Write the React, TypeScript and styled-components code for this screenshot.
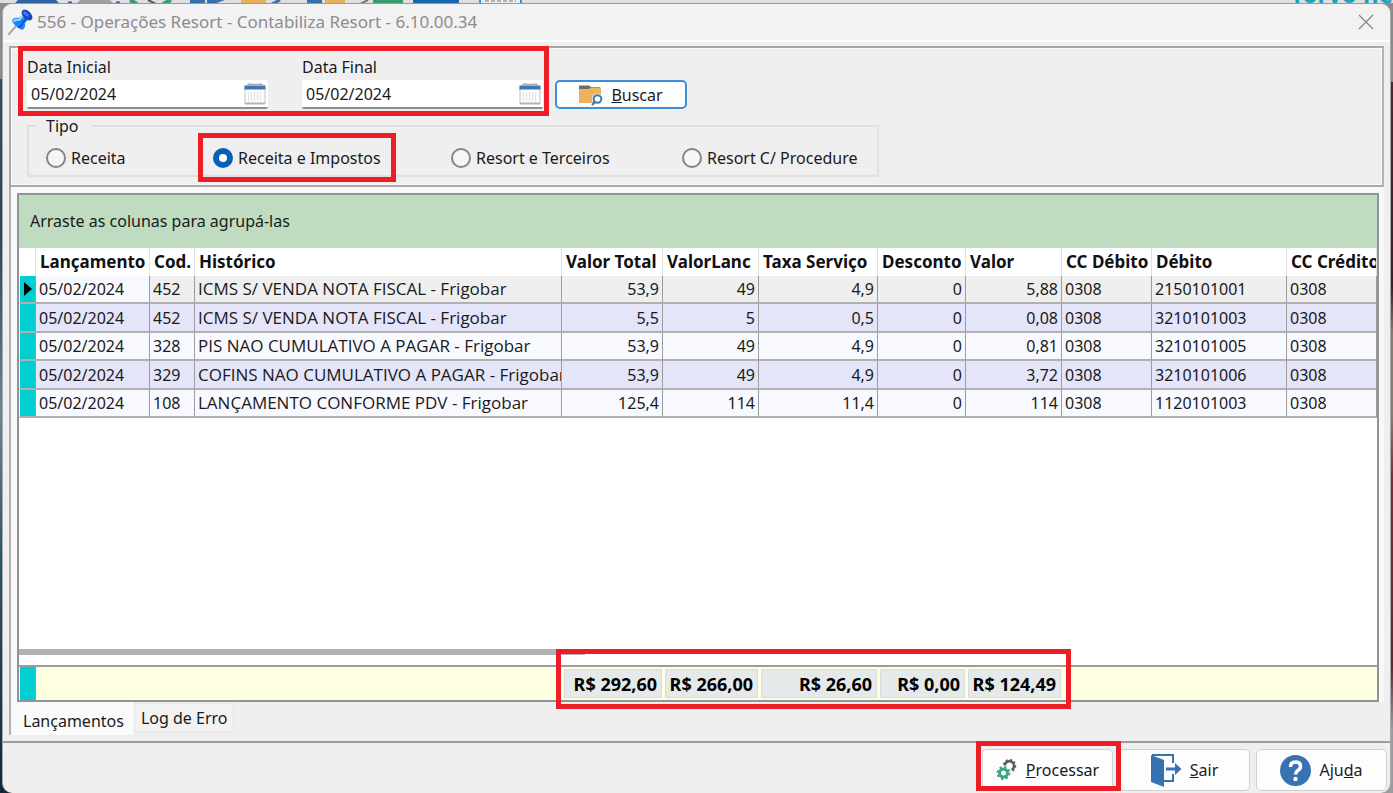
import React from "react";
import styled, { createGlobalStyle, css } from "styled-components";

const GlobalStyle = createGlobalStyle`
  * { box-sizing: border-box; }
  html, body { margin: 0; }
  body {
    font-family: "Noto Sans", "Open Sans", sans-serif;
    font-size: 16px;
    line-height: 20px;
    color: #1a1a1a;
    overflow: hidden;
  }
  button, input { font: inherit; color: inherit; }
`;

const Desktop = styled.div`
  height: 100vh;
  display: flex;
  flex-direction: column;
  background: linear-gradient(#8a8c8e 0 10%, #2c4f60 10%, #234a60 30%, #6a8690 52%, #2b556a 70%, #10283a);
`;

const Strip = styled.div`
  flex: none;
  height: 3px;
  display: flex;
  justify-content: space-between;
  background: #dfdfdf;
  overflow: hidden;
`;

const Banner = styled.span`
  align-self: flex-end;
  color: #1fa0bd;
  font-size: 24px;
  line-height: 18px;
  font-weight: 700;
  white-space: nowrap;
`;

const Backdrop = styled.div`
  flex: 1;
  min-height: 0;
  display: flex;
  padding: 0 2px;
  background: linear-gradient(#8a8c8e 0 10%, #4a2a30 10%, #3a2028 36%, #8c7d74 42%, #8c7d74 52%, #7a3038 60%, #5b2b33 84%, #9a9ca0 92%) right / 50% 100% no-repeat;
`;

const Window = styled.main`
  flex: 1;
  min-width: 0;
  display: flex;
  flex-direction: column;
  background: #efefef;
  border: 1px solid #a9a9a9;
  border-top-color: #9a9a9a;
  border-bottom: 0;
  border-radius: 10px;
  overflow: hidden;
`;

const TitleBar = styled.header`
  flex: none;
  height: 38px;
  display: flex;
  align-items: center;
  padding: 0 16px 0 5px;
  background: #f2f2f2;
  border-bottom: 2px solid #fdfdfd;
`;

const Title = styled.h1`
  flex: 1;
  margin: 0 0 0 4px;
  font-size: 17px;
  line-height: 22px;
  font-weight: 400;
  color: #8c8c8c;
`;

const IconButton = styled.button`
  display: flex;
  padding: 0;
  border: 0;
  background: none;
`;

const Content = styled.div`
  flex: 1;
  min-height: 0;
  display: flex;
  flex-direction: column;
  margin: 4px 6px 0;
`;

const SearchPanel = styled.section`
  flex: none;
  padding: 9px 16px 8px;
  border: 2px solid #b4b4b4;
  border-color: #a8a8a8 #b4b4b4 #a8a8a8 #a8a8a8;
  outline: 1px solid #fafafa;
  outline-offset: -3px;
`;

const FieldRow = styled.div`
  display: flex;
  align-items: flex-end;
  gap: 12px;
`;

const Highlightable = styled.div`
  position: relative;
  display: flex;
`;

const Highlight = styled.span<{ $inset: string; $width?: number }>`
  position: absolute;
  inset: ${(p) => p.$inset};
  ${(p) => p.$width && `width: ${p.$width}px;`}
  border: 5px solid #ee1c25;
  pointer-events: none;
  z-index: 2;
`;

const DateFields = styled(Highlightable)`
  gap: 34px;
`;

const Field = styled.label`
  width: 241px;
  display: flex;
  flex-direction: column;
  gap: 3px;
`;

const InputBox = styled.span`
  height: 29px;
  display: flex;
  align-items: center;
  padding: 0 2px 0 4px;
  background: #fff;
  border-bottom: 2px solid #8f8f8f;
  border-radius: 2px;
`;

const DateInput = styled.input`
  flex: 1;
  min-width: 0;
  padding: 0;
  border: 0;
  outline: 0;
  background: none;
`;

const PushButton = styled.button<{ $large?: boolean; $focused?: boolean }>`
  width: ${(p) => (p.$large ? 131 : 132)}px;
  height: ${(p) => (p.$large ? 42 : 29)}px;
  display: flex;
  align-items: center;
  justify-content: center;
  gap: 8px;
  padding: 0;
  background: #fdfdfd;
  border-radius: 5px;
  border: ${(p) => (p.$focused ? "2px solid #3a8edb" : "1px solid #d0d0d0")};
`;

const TypeGroup = styled.fieldset`
  max-width: 852px;
  height: 60px;
  margin: 8px 0 0;
  padding: 14px 17px 0;
  border: 2px solid #e0e0e0;
`;

const Legend = styled.legend`
  padding: 0 12px 0 9px;
  margin-left: -9px;
  line-height: 18px;
  margin-bottom: -1px;
`;

const Options = styled.div`
  display: grid;
  grid-template-columns: 167px 238px 231px auto;
`;

const Option = styled.label`
  display: flex;
  align-items: center;
  gap: 5px;
  white-space: nowrap;
`;

const Radio = styled.input`
  appearance: none;
  width: 20px;
  height: 20px;
  margin: 0;
  border: 2px solid #858585;
  border-radius: 50%;
  background: #f6f6f6;
  &:checked {
    border: 6px solid #0560b6;
    background: #fff;
  }
`;

const GridArea = styled.section`
  flex: 1;
  min-height: 0;
  display: flex;
  flex-direction: column;
  padding: 6px 5px 0 6px;
  border-left: 2px solid #b0b0b0;
  background: #f8f8f8;
`;

const GridFrame = styled.div`
  flex: 1;
  min-height: 0;
  display: flex;
  flex-direction: column;
  background: #fff;
  border: 2px solid #8e9499;
  overflow: hidden;
`;

const GroupBar = styled.div`
  flex: none;
  height: 53px;
  padding: 16px 11px;
  background: #bfdcc0;
`;

const Table = styled.table`
  width: 100%;
  table-layout: fixed;
  border-collapse: separate;
  border-spacing: 0;
`;

const HeadCell = styled.th`
  height: 28px;
  padding: 0 0 0 4px;
  text-align: left;
  font-size: 17px;
  font-weight: 700;
  color: #111;
  white-space: nowrap;
  overflow: hidden;
  border-right: 1px solid #e0e0e0;
`;

const Row = styled.tr<{ $current: boolean }>`
  height: 28px;
  background: ${(p) => (p.$current ? "#efefef" : "#f8f9ff")};
  &:nth-child(even) {
    height: 29px;
    background: #e4e5f9;
  }
`;

const cellEdge = css`
  border-right: 1px solid #9c9c9c;
  border-bottom: 2px solid #b0b0b0;
`;

const Cell = styled.td<{ $right?: boolean; $plain?: boolean; $wide?: boolean }>`
  padding: 0 3px;
  text-align: ${(p) => (p.$right ? "right" : "left")};
  ${(p) => p.$wide && `font-family: "Open Sans", "Noto Sans", sans-serif; font-size: 17px;`}
  white-space: nowrap;
  overflow: hidden;
  ${(p) => p.$plain && "background: #f8f9ff;"}
  ${cellEdge}
`;

const Marker = styled.td`
  padding: 0;
  background: #00ced1;
  border-left: 1px solid #fff;
  ${cellEdge}
`;

const Spacer = styled.div`
  flex: 1;
`;

const ScrollTrack = styled.div`
  flex: none;
  height: 16px;
`;

const ScrollThumb = styled.div`
  width: 41.7%;
  height: 6px;
  background: #b2b2b2;
`;

const Totals = styled.div`
  flex: none;
  border-top: 2px solid #9c9c9c;
  background: #ffffe1;
`;

const TotalCell = styled.td`
  height: 33px;
  padding: 2px 1px 2px 2px;
`;

const TotalMarker = styled(Marker)`
  border-bottom: 0;
`;

const TotalBox = styled.output`
  display: flex;
  align-items: center;
  justify-content: flex-end;
  height: 29px;
  padding-right: 4px;
  background: #e5e9ea;
  border: 1px solid #d9dcdc;
  font-size: 18px;
  font-weight: 700;
  white-space: nowrap;
  color: #000;
`;

const Tabs = styled.nav`
  flex: none;
  height: 33px;
  display: flex;
  margin: 0 -5px 0 -6px;
  background: #efefef;
`;

const Tab = styled.button<{ $active?: boolean }>`
  padding: ${(p) => (p.$active ? "4px 10px 0 12px" : "0 6px")};
  height: ${(p) => (p.$active ? 33 : 29)}px;
  margin-top: ${(p) => (p.$active ? 0 : 1)}px;
  border: ${(p) => (p.$active ? "0" : "1px solid #e6e6e6")};
  background: ${(p) => (p.$active ? "#fafafa" : "#f2f2f2")};
`;

const ActionBar = styled.footer`
  flex: none;
  height: 52px;
  display: flex;
  justify-content: flex-end;
  align-items: flex-start;
  gap: 6px;
  margin-top: 6px;
  padding: 6px 3px 0;
  border-top: 2px solid #9c9c9c;
`;

const PinIcon = () => (
  <svg width="25" height="26" viewBox="0 0 25 26" aria-hidden="true">
    <path d="M1 25 L10 15" stroke="#a5a9ae" strokeWidth="2" strokeLinecap="round" />
    <path d="M4 12 Q5 8 11 9 L16 5 L21 9 L17 14 Q18 19 14 21 Q7 18 4 12Z" fill="#1f86f5" />
    <path d="M6 12 Q7 10 11 11 L15 7" stroke="#9bd6ff" strokeWidth="2" fill="none" strokeLinecap="round" />
    <path d="M10 18 Q14 18 15 13 L20 9" stroke="#0a58dc" strokeWidth="2" fill="none" />
    <ellipse cx="19" cy="6" rx="6.500" ry="4" transform="rotate(45 19 6)" fill="#1447c4" />
    <ellipse cx="18" cy="5" rx="3.500" ry="1.500" transform="rotate(45 18 5)" fill="#3f7df0" />
  </svg>
);

const CloseIcon = () => (
  <svg width="16" height="16" viewBox="0 0 16 16" aria-hidden="true">
    <path d="M1 1 L15 15 M15 1 L1 15" stroke="#858585" strokeWidth="1.200" />
  </svg>
);

const CalendarIcon = () => (
  <svg width="22" height="22" viewBox="0 0 22 22" aria-hidden="true">
    <rect x="1" y="4" width="20" height="16.500" fill="#fbfbfb" stroke="#c4c4c4" />
    <rect x="0.500" y="2.500" width="21" height="4" fill="#3d78b6" />
    <path d="M3 3 Q5 0 7 1.500 H15 Q17 0 19 3" stroke="#a2a6aa" strokeWidth="1.500" fill="none" />
    <path d="M4.500 9V18M7.500 9V18M10.500 9V18M13.500 9V18M16.500 9V18" stroke="#e4e4e4" />
    <path d="M1 20.500H21" stroke="#b4b4b4" strokeWidth="2" />
  </svg>
);

const FolderSearchIcon = () => (
  <svg width="24" height="22" viewBox="0 0 24 22" aria-hidden="true">
    <path d="M0 5V1.500H10L12 3H21V6H0Z" fill="#6d6d70" />
    <path d="M0 5H10L12 3.500H22V19H0Z" fill="#ecb35f" />
    <circle cx="18.500" cy="15" r="5.500" fill="#fdfdfd" />
    <circle cx="18.500" cy="15" r="3.800" fill="#fff" stroke="#3f76b5" strokeWidth="2" />
    <path d="M15.800 18 L13 21" stroke="#3f76b5" strokeWidth="2.200" />
  </svg>
);

const GearsIcon = () => (
  <svg width="22" height="22" viewBox="0 0 22 22" aria-hidden="true">
    <path d="M9 6.500 A4.500 4.500 0 1 1 15.500 10.800" fill="none" stroke="#5c5c5c" strokeWidth="2.400" />
    <path d="M7.800 5.500 A5.800 5.800 0 1 1 15.500 12.200" fill="none" stroke="#5c5c5c" strokeWidth="2" strokeDasharray="2 2.100" />
    <circle cx="7.500" cy="14" r="4" fill="none" stroke="#3ba57c" strokeWidth="3" />
    <circle cx="7.500" cy="14" r="6" fill="none" stroke="#3ba57c" strokeWidth="2" strokeDasharray="2.200 2.512" />
  </svg>
);

const ExitIcon = () => (
  <svg width="31" height="33" viewBox="0 0 31 33" aria-hidden="true">
    <path d="M1 1H22V9M22 20V27H13" fill="none" stroke="#3873b1" strokeWidth="2" />
    <path d="M0 1 L13 6V33L0 28Z" fill="#3873b1" />
    <path d="M15 13.500H24V9L30.500 15L24 21V16.500H15Z" fill="#3873b1" />
  </svg>
);

const HelpIcon = () => (
  <svg width="31" height="31" viewBox="0 0 31 31" aria-hidden="true">
    <circle cx="15.500" cy="15.500" r="15.500" fill="#3873b1" />
    <path d="M10.500 12 Q10.500 7 15.500 7 Q20.500 7 20.500 11.500 Q20.500 14 17.500 15.700 Q15.500 17 15.500 19.500" fill="none" stroke="#fff" strokeWidth="3.500" />
    <circle cx="15.500" cy="24" r="2.200" fill="#fff" />
  </svg>
);

const CurrentRowIcon = () => (
  <svg width="16" height="14" viewBox="0 0 16 14" display="block" aria-label="Linha atual">
    <path d="M4 0 L12 7 L4 14Z" fill="#000" />
  </svg>
);

const ToolbarEdge = () => (
  <svg width="530" height="4" viewBox="0 0 530 4" aria-hidden="true">
    <path d="M18 0H56L60 4H14Z" fill="#2e64a0" />
    <path d="M80 0H110L114 4H76Z" fill="#a0a0a0" />
    <path d="M68 3H72M116 3H120" stroke="#2e64a0" strokeWidth="3" />
    <path d="M130 0L137 4M171 0L163 4" stroke="#3a9c6c" strokeWidth="4" />
    <path d="M148 0L156 4" stroke="#555" strokeWidth="2" />
    <path d="M190 0H205V4H190ZM207 0H225L214 4H207Z" fill="#3a6fae" />
    <path d="M241 0H266V4H241Z" fill="#e7b15c" />
    <path d="M280 0L272 4" stroke="#3a6fae" strokeWidth="3" />
    <path d="M307 0H322V4H307Z" fill="#3a6fae" />
    <path d="M325 0H345V4H325Z" fill="#e7b15c" />
    <path d="M368 0L360 4" stroke="#777" strokeWidth="2" />
    <path d="M373 0H403V4H373Z" fill="#3a9c6c" />
    <path d="M413 0H459V4H413Z" fill="#1c67ac" />
    <path d="M480 0V4H521V0" fill="#eee" stroke="#3a8edb" strokeWidth="2" />
    <path d="M485 1H516" stroke="#777" strokeDasharray="4 2" />
  </svg>
);

const columns = [
  { title: "Lançamento", width: 114 },
  { title: "Cod.", width: 45 },
  { title: "Histórico", width: 367, wide: true },
  { title: "Valor Total", width: 101, right: true, total: "R$ 292,60" },
  { title: "ValorLanc", width: 96, right: true, total: "R$ 266,00" },
  { title: "Taxa Serviço", width: 119, right: true, total: "R$ 26,60" },
  { title: "Desconto", width: 88, right: true, total: "R$ 0,00" },
  { title: "Valor", width: 96, right: true, total: "R$ 124,49" },
  { title: "CC Débito", width: 90 },
  { title: "Débito", width: 135 },
  { title: "CC Crédito", width: undefined },
];

const rows = [
  ["05/02/2024", "452", "ICMS S/ VENDA NOTA FISCAL - Frigobar", "53,9", "49", "4,9", "0", "5,88", "0308", "2150101001", "0308"],
  ["05/02/2024", "452", "ICMS S/ VENDA NOTA FISCAL - Frigobar", "5,5", "5", "0,5", "0", "0,08", "0308", "3210101003", "0308"],
  ["05/02/2024", "328", "PIS NAO CUMULATIVO A PAGAR - Frigobar", "53,9", "49", "4,9", "0", "0,81", "0308", "3210101005", "0308"],
  ["05/02/2024", "329", "COFINS NAO CUMULATIVO A PAGAR - Frigobar", "53,9", "49", "4,9", "0", "3,72", "0308", "3210101006", "0308"],
  ["05/02/2024", "108", "LANÇAMENTO CONFORME PDV - Frigobar", "125,4", "114", "11,4", "0", "114", "0308", "1120101003", "0308"],
];

const types = ["Receita", "Receita e Impostos", "Resort e Terceiros", "Resort C/ Procedure"];

const Columns = () => (
  <colgroup>
    <col width={17} />
    {columns.map((c) => (
      <col key={c.title} width={c.width} />
    ))}
  </colgroup>
);

const DateField = ({ label }: { label: string }) => (
  <Field>
    {label}
    <InputBox>
      <DateInput defaultValue="05/02/2024" />
      <CalendarIcon />
    </InputBox>
  </Field>
);

export default function App() {
  return (
    <Desktop>
      <GlobalStyle />
      <Strip>
        <ToolbarEdge />
        <Banner>Torvo ne</Banner>
      </Strip>
      <Backdrop>
        <Window>
          <TitleBar>
            <PinIcon />
            <Title>556 - Operações Resort - Contabiliza Resort - 6.10.00.34</Title>
            <IconButton aria-label="Fechar">
              <CloseIcon />
            </IconButton>
          </TitleBar>
          <Content>
            <SearchPanel>
              <FieldRow>
                <DateFields>
                  <DateField label="Data Inicial" />
                  <DateField label="Data Final" />
                  <Highlight $inset="-11px -6px -7px -9px" />
                </DateFields>
                <PushButton $focused>
                  <FolderSearchIcon />
                  <span><u>B</u>uscar</span>
                </PushButton>
              </FieldRow>
              <TypeGroup>
                <Legend>Tipo</Legend>
                <Options>
                  {types.map((t, i) => (
                    <Highlightable key={t}>
                      <Option>
                        <Radio type="radio" name="tipo" defaultChecked={i === 1} />
                        {t}
                      </Option>
                      {i === 1 && <Highlight $inset="-15px 55px -14px -15px" />}
                    </Highlightable>
                  ))}
                </Options>
              </TypeGroup>
            </SearchPanel>
            <GridArea>
              <GridFrame>
                <GroupBar>Arraste as colunas para agrupá-las</GroupBar>
                <Table>
                  <Columns />
                  <thead>
                    <tr>
                      <HeadCell />
                      {columns.map((c) => (
                        <HeadCell key={c.title}>{c.title}</HeadCell>
                      ))}
                    </tr>
                  </thead>
                  <tbody>
                    {rows.map((r, i) => (
                      <Row key={i} $current={i === 0}>
                        <Marker>{i === 0 && <CurrentRowIcon />}</Marker>
                        {r.map((v, j) => (
                          <Cell key={j} $right={columns[j].right} $wide={columns[j].wide} $plain={i === 0 && j === 0}>
                            {v}
                          </Cell>
                        ))}
                      </Row>
                    ))}
                  </tbody>
                </Table>
                <Spacer />
                <ScrollTrack>
                  <ScrollThumb />
                </ScrollTrack>
                <Totals>
                  <Table>
                    <Columns />
                    <tbody>
                      <tr>
                        <TotalMarker />
                        {columns.map((c) => (
                          <TotalCell key={c.title}>{c.total && <TotalBox>{c.total}</TotalBox>}</TotalCell>
                        ))}
                      </tr>
                    </tbody>
                  </Table>
                </Totals>
              </GridFrame>
              <Highlightable>
                <Highlight $inset="-53px auto -7px 539px" $width={515} />
              </Highlightable>
              <Tabs>
                <Tab $active>Lançamentos</Tab>
                <Tab>Log de Erro</Tab>
              </Tabs>
            </GridArea>
          </Content>
          <ActionBar>
            <Highlightable>
              <PushButton $large>
                <GearsIcon />
                <span><u>P</u>rocessar</span>
              </PushButton>
              <Highlight $inset="-8px -8px 0 -6px" />
            </Highlightable>
            <PushButton $large>
              <ExitIcon />
              <span><u>S</u>air</span>
            </PushButton>
            <PushButton $large>
              <HelpIcon />
              <span>Aju<u>d</u>a</span>
            </PushButton>
          </ActionBar>
        </Window>
      </Backdrop>
    </Desktop>
  );
}
